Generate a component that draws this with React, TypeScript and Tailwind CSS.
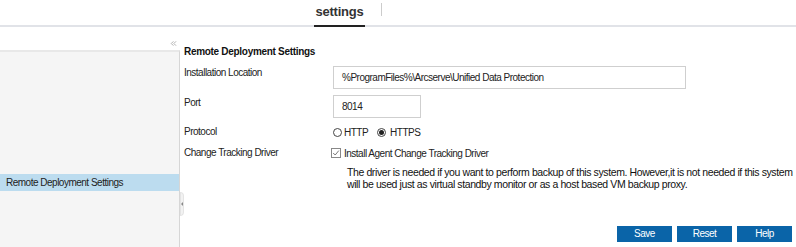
import { ChevronsLeft } from 'lucide-react'

export default function App() {
  return (
    <div className="w-[796px] h-[247px] bg-white flex flex-col overflow-hidden font-['Liberation_Sans',Arial,sans-serif] text-[10px] tracking-[-0.5px] text-[#222]">
      {/* header */}
      <div className="h-[27px] border-b-2 border-[#e1e3e8] flex items-end justify-center">
        <div className="flex items-end ml-[-100px]">
          <div className="px-[1px] pb-[7px] border-b-2 border-[#222] mb-[-2px] font-bold text-[13px] tracking-[-0.2px] leading-none text-[#333]">
            settings
          </div>
          <div className="w-px h-[13px] bg-[#ccc] ml-[16px] mb-[9px]" />
        </div>
      </div>

      <div className="flex flex-1 min-h-0">
        {/* sidebar */}
        <div className="w-[180px] flex flex-col pt-[13px]">
          <div className="h-[10px] flex justify-end pr-[2px]">
            <ChevronsLeft className="w-[9px] h-[9px] text-[#aaa] mt-[-1px]" strokeWidth={2.5} />
          </div>
          <div className="flex-1 bg-[#f5f5f5] border-t-2 border-[#e8e8e8] border-r border-r-[#d6d6d6] flex flex-col pt-[122px]">
            <div className="h-[17px] bg-[#bcdcef] flex items-center pl-[6px] text-[#222]">
              Remote Deployment Settings
            </div>
          </div>
        </div>

        {/* collapse handle */}
        <div className="w-[4px] pt-[165px]">
          <div className="h-[24px] w-[4px] bg-[#f2f2f2] border border-[#e4e4e4] rounded-r-sm flex items-center">
            <div className="w-0 h-0 border-y-[2px] border-y-transparent border-r-[2px] border-r-[#888]" />
          </div>
        </div>

        {/* main */}
        <div className="flex-1 flex flex-col pt-[20px]">
          <div className="font-bold text-[10px] tracking-[-0.3px] text-[#111] leading-none">Remote Deployment Settings</div>
          <div className="grid grid-cols-[149px_1fr] mt-[9px]">
            <div className="leading-[12px] translate-y-[1px]">Installation Location</div>
            <div className="h-[23px] w-[353px] border border-[#cfcfcf] flex items-center pl-[8px]">
              %ProgramFiles%\Arcserve\Unified Data Protection
            </div>
            <div className="mt-[6px] leading-[12px] translate-y-[2px]">Port</div>
            <div className="mt-[6px] h-[23px] w-[88px] border border-[#cfcfcf] flex items-center pl-[8px]">8014</div>
            <div className="mt-[7px] h-[14px] flex items-center translate-y-[-1px]">Protocol</div>
            <div className="mt-[7px] h-[14px] flex items-center">
              <span className="w-[9px] h-[9px] rounded-full border border-[#444] bg-white" />
              <span className="ml-[2px]">HTTP</span>
              <span className="ml-[9px] w-[9px] h-[9px] rounded-full border border-[#444] bg-white flex items-center justify-center">
                <span className="w-[5px] h-[5px] rounded-full bg-[#222]" />
              </span>
              <span className="ml-[4px]">HTTPS</span>
            </div>
            <div className="mt-[8px] h-[14px] flex items-center translate-y-[-2px]">Change Tracking Driver</div>
            <div className="mt-[8px] flex flex-col ml-[-2px]">
              <div className="h-[14px] flex items-center translate-y-[-1px]">
                <span className="w-[10px] h-[10px] border border-[#888] flex items-center justify-center">
                  <svg viewBox="0 0 10 10" className="w-[8px] h-[8px]">
                    <path d="M1.5 5 L4 7.5 L8.5 2" fill="none" stroke="#666" strokeWidth="1.1" />
                  </svg>
                </span>
                <span className="ml-[3px]">Install Agent Change Tracking Driver</span>
              </div>
              <div className="mt-[5px] ml-[16px] mr-[2px] text-[10.5px] tracking-[-0.4px] leading-[12px] text-[#111]">
                The driver is needed if you want to perform backup of this system. However,it is not needed if this system will be used just as virtual standby monitor or as a host based VM backup proxy.
              </div>
            </div>
          </div>
          <div className="flex-1" />
          <div className="flex justify-end gap-[5px] mb-[5px] pr-[4px]">
            <button className="w-[55px] h-[16px] bg-[#0a64a8] text-white leading-none">Save</button>
            <button className="w-[55px] h-[16px] bg-[#0a64a8] text-white leading-none">Reset</button>
            <button className="w-[55px] h-[16px] bg-[#0a64a8] text-white leading-none">Help</button>
          </div>
        </div>
      </div>
    </div>
  )
}
